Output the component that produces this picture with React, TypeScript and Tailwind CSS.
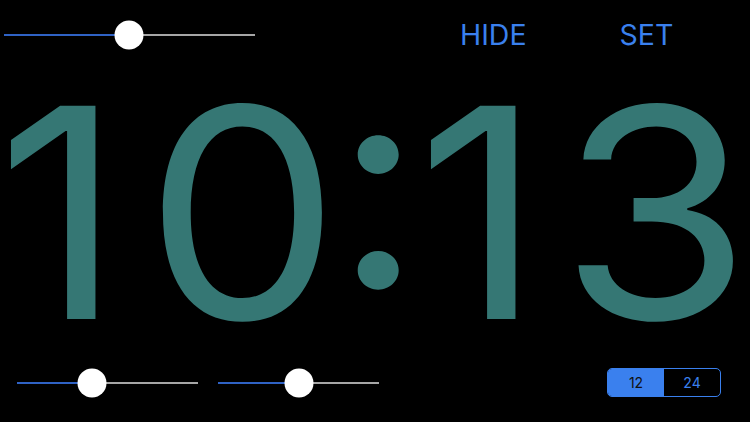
import { useState } from 'react';

function Slider({ width, value }: { width: number; value: number }) {
  // value = thumb centre, in px from the track's left edge
  return (
    <div className="relative flex h-[30px] items-center" style={{ width }}>
      <div className="flex h-[2px] w-full">
        <div className="h-full bg-[#2f62c4]" style={{ width: value }} />
        <div className="h-full flex-1 bg-[#a6a6a6]" />
      </div>
      <div
        className="absolute top-1/2 h-[29px] w-[29px] -translate-x-1/2 -translate-y-1/2 rounded-full bg-white"
        style={{ left: value }}
      />
    </div>
  );
}

const CELLS: { ch: string; w: string }[] = [
  { ch: '1', w: 'w-[119px]' },
  { ch: '0', w: 'w-[246px]' },
  { ch: ':', w: 'w-[27px]' },
  { ch: '1', w: 'w-[175px]' },
  { ch: '3', w: 'w-[176px]' },
];

export default function App() {
  const [format, setFormat] = useState<'12' | '24'>('12');

  return (
    <div className="flex h-[422px] w-[750px] flex-col overflow-hidden bg-black font-['Inter','Roboto',sans-serif]">
      <div className="flex h-[70px] shrink-0 items-center">
        <div className="ml-[4px]">
          <Slider width={251} value={125} />
        </div>
        <button className="ml-[205px] text-[28.5px] leading-none text-[#3a80ee]">HIDE</button>
        <button className="ml-[93px] text-[28.5px] leading-none text-[#3a80ee]">SET</button>
      </div>

      <div className="mt-[23px] flex h-[240px] text-[293px] font-normal leading-[240px] text-[#357774] [font-feature-settings:'case']">
        {CELLS.map((c, i) => (
          <div key={i} className={`flex shrink-0 justify-center ${c.w}`}>
            <span className="inline-block scale-x-[1.06] whitespace-nowrap">{c.ch}</span>
          </div>
        ))}
      </div>

      <div className="mt-auto mb-[25px] flex h-[29px] items-center">
        <div className="ml-[17px]">
          <Slider width={181} value={75} />
        </div>
        <div className="ml-[20px]">
          <Slider width={161} value={81} />
        </div>
        <div className="ml-[228px] flex h-[29px] w-[114px] overflow-hidden rounded-[5px] border border-[#3a80ee] text-[14px]">
          <button
            onClick={() => setFormat('12')}
            className={format === '12' ? 'flex-1 bg-[#3a80ee] text-[#111]' : 'flex-1 text-[#3a80ee]'}
          >
            12
          </button>
          <button
            onClick={() => setFormat('24')}
            className={format === '24' ? 'flex-1 bg-[#3a80ee] text-[#111]' : 'flex-1 text-[#3a80ee]'}
          >
            24
          </button>
        </div>
      </div>
    </div>
  );
}
